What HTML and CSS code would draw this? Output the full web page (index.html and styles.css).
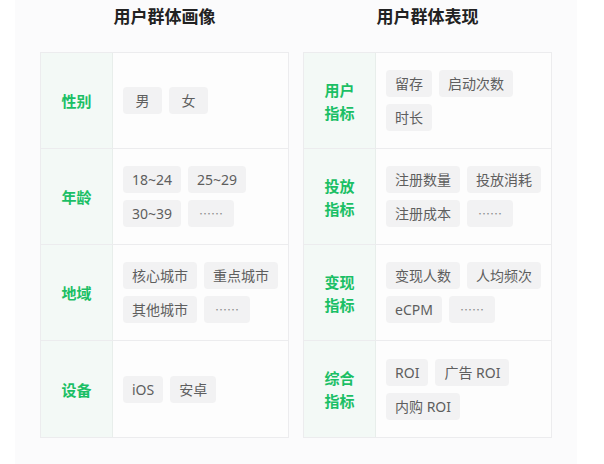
FILE: index.html
```html
<!DOCTYPE html>
<html lang="zh">
<head>
<meta charset="utf-8">
<title>用户群体</title>
<link rel="stylesheet" href="styles.css">
</head>
<body>
<div class="page">
  <section class="panel">
    <h2 class="title">用户群体画像</h2>
    <div class="table">
      <div class="row">
        <div class="label">性别</div>
        <div class="tags"><span class="tag single">男</span><span class="tag single">女</span></div>
      </div>
      <div class="row">
        <div class="label">年龄</div>
        <div class="tags"><span class="tag">18~24</span><span class="tag">25~29</span><span class="tag">30~39</span><span class="tag dots">……</span></div>
      </div>
      <div class="row">
        <div class="label">地域</div>
        <div class="tags"><span class="tag">核心城市</span><span class="tag">重点城市</span><span class="tag">其他城市</span><span class="tag dots">……</span></div>
      </div>
      <div class="row">
        <div class="label">设备</div>
        <div class="tags"><span class="tag">iOS</span><span class="tag">安卓</span></div>
      </div>
    </div>
  </section>
  <section class="panel">
    <h2 class="title">用户群体表现</h2>
    <div class="table">
      <div class="row">
        <div class="label">用户<br>指标</div>
        <div class="tags"><span class="tag">留存</span><span class="tag">启动次数</span><span class="tag">时长</span></div>
      </div>
      <div class="row">
        <div class="label">投放<br>指标</div>
        <div class="tags"><span class="tag">注册数量</span><span class="tag">投放消耗</span><span class="tag">注册成本</span><span class="tag dots">……</span></div>
      </div>
      <div class="row">
        <div class="label">变现<br>指标</div>
        <div class="tags"><span class="tag">变现人数</span><span class="tag">人均频次</span><span class="tag">eCPM</span><span class="tag dots">……</span></div>
      </div>
      <div class="row">
        <div class="label">综合<br>指标</div>
        <div class="tags"><span class="tag">ROI</span><span class="tag">广告 ROI</span><span class="tag">内购 ROI</span></div>
      </div>
    </div>
  </section>
</div>
</body>
</html>
```
FILE: styles.css
```css
html, body {
  margin: 0;
  padding: 0;
  background: #ffffff;
}
body {
  font-family: "Noto Sans", "Noto Sans CJK SC", sans-serif;
}
.page {
  width: 562px;
  min-height: 464px;
  margin-left: 15px;
  background: #fbfbfc;
  display: flex;
  gap: 14px;
  padding: 0 25px;
  box-sizing: border-box;
}
.panel {
  width: 249px;
}
.title {
  margin: 0 0 20px;
  height: 32px;
  line-height: 32px;
  text-align: center;
  font-size: 17px;
  font-weight: 700;
  color: #222;
  font-family: "Noto Sans CJK SC", sans-serif;
}
.table {
  border: 1px solid #ececee;
  background: #fdfdfd;
}
.row {
  display: flex;
  height: 95px;
  border-bottom: 1px solid #ececee;
}
.row:last-child {
  border-bottom: 0;
  height: 96px;
}
.label {
  width: 71px;
  flex: none;
  border-right: 1px solid #e8eeeb;
  background: #f3f9f6;
  color: #1bbf65;
  font-family: "Noto Sans CJK SC", sans-serif;
  font-weight: 700;
  font-size: 15px;
  line-height: 23px;
  display: flex;
  align-items: center;
  justify-content: center;
  text-align: center;
}
.tags {
  flex: 1;
  padding: 0 9px 0 10px;
  display: flex;
  flex-wrap: wrap;
  align-content: center;
  gap: 7px 7px;
}
.tag {
  height: 27px;
  line-height: 27px;
  padding: 0 9px;
  background: #f2f2f3;
  border-radius: 4px;
  font-size: 14px;
  color: #5e5e5e;
  font-family: "Noto Sans", "Noto Sans CJK SC", sans-serif;
  box-sizing: border-box;
  white-space: nowrap;
}
.tag.single {
  min-width: 39px;
  text-align: center;
}
.tag.dots {
  width: 46px;
  text-align: center;
  padding: 0;
  font-family: "Noto Sans CJK SC", sans-serif;
  font-size: 12px;
  color: #8a8a8a;
}
```
